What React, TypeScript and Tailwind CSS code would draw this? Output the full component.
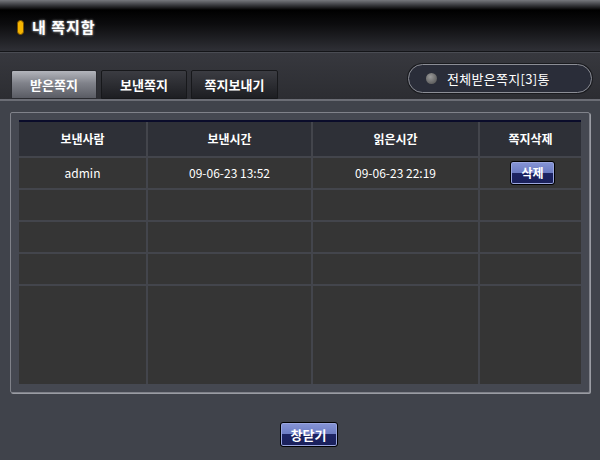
import React from 'react'

const font = { fontFamily: '"Noto Sans CJK KR", "Liberation Sans", sans-serif' }

const rows = [
  { from: 'admin', sent: '09-06-23 13:52', read: '09-06-23 22:19' },
]

const BlueButton: React.FC<{ label: string; className?: string }> = ({ label, className }) => {
  return (
    <button
      className={`rounded-[3px] border border-black bg-[linear-gradient(to_bottom,#8795d6_0%,#6b7bc2_50%,#1d2463_50%,#1a205a_100%)] p-[1px] text-[12px] font-bold leading-none text-white shadow-[inset_0_0_0_1px_#9aa6de] ${className ?? ''}`}
    >
      {label}
    </button>
  )
}

export default function App() {
  return (
    <div className="flex h-[460px] w-[600px] flex-col overflow-hidden bg-[#40434b]" style={font}>
      {/* header */}
      <div className="flex h-[51px] items-center gap-[8px] bg-[linear-gradient(to_bottom,#76787d_0px,#3a3b3f_5px,#000_10px,#0c0c0e_24px,#2f3036_51px)] pl-[17px] pt-[4px]">
        <span className="h-[15px] w-[7px] rounded-full border border-[#7a5200] bg-[#f5b400]" />
        <span className="text-[15px] font-bold tracking-[1px] text-white [text-shadow:0_0_3px_#999,0_0_2px_#777]">내 쪽지함</span>
      </div>
      <div className="h-[1px] bg-[#141518]" />
      <div className="h-[1px] bg-[#4a4c53]" />

      {/* tabs */}
      <div className="flex h-[46px] items-end justify-between bg-[linear-gradient(to_bottom,#37383e,#2c2d32)] px-[10px]">
        <div className="flex gap-[4px] pl-[1px]">
          <div className="flex h-[29px] w-[86px] items-center justify-center rounded-t-[2px] border border-[#2a2b30] bg-[linear-gradient(to_bottom,#b3b5bc,#80828a_45%,#5a5c64)] text-[13px] font-bold text-white">
            받은쪽지
          </div>
          <div className="flex h-[29px] w-[86px] items-center justify-center rounded-t-[2px] border border-[#17181b] bg-[linear-gradient(to_bottom,#3b3c42,#1d1e22)] text-[13px] font-bold text-white">
            보낸쪽지
          </div>
          <div className="flex h-[29px] w-[87px] items-center justify-center rounded-t-[2px] border border-[#17181b] bg-[linear-gradient(to_bottom,#3b3c42,#1d1e22)] text-[13px] font-bold text-white">
            쪽지보내기
          </div>
        </div>
        <div className="mb-[6px] mr-[-2px] flex h-[29px] w-[184px] items-center gap-[10px] rounded-full border border-[#8c8e96] bg-[#2a2d39] pl-[17px] shadow-[0_0_0_1px_#1a1b1f]">
          <span className="h-[11px] w-[11px] rounded-full bg-[radial-gradient(circle_at_40%_35%,#9a9a9a,#4a4a4a)]" />
          <span className="text-[13px] tracking-[0.3px] text-white">전체받은쪽지[3]통</span>
        </div>
      </div>
      <div className="h-[2px] bg-[#6b6d75]" />

      {/* panel */}
      <div className="mx-[10px] mt-[11px] h-[281px] rounded-[2px] border border-[#80828a] bg-[#454851] px-[8px] pt-[7px] shadow-[1px_1px_0_#9a9ca3]">
        <div className="border-t-2 border-[#0a0c2a]">
          <div className="grid grid-cols-[127px_163px_165px_101px] gap-[2px] bg-[#43454c] text-[12px] text-white">
            {['보낸사람', '보낸시간', '읽은시간', '쪽지삭제'].map((h) => (
              <div key={h} className="flex h-[34px] items-center justify-center bg-[#2e3037] font-bold">
                {h}
              </div>
            ))}
            {rows.map((r) => (
              <React.Fragment key={r.from}>
                <div className="flex h-[30px] items-center justify-center bg-[#353535]">{r.from}</div>
                <div className="flex h-[30px] items-center justify-center bg-[#353535]">{r.sent}</div>
                <div className="flex h-[30px] items-center justify-center bg-[#353535]">{r.read}</div>
                <div className="flex h-[30px] items-center justify-center bg-[#353535]">
                  <BlueButton label="삭제" className="ml-[4px] h-[24px] w-[45px]" />
                </div>
              </React.Fragment>
            ))}
            {[0, 1, 2].map((i) => (
              <React.Fragment key={i}>
                <div className="h-[30px] bg-[#353535]" />
                <div className="h-[30px] bg-[#353535]" />
                <div className="h-[30px] bg-[#353535]" />
                <div className="h-[30px] bg-[#353535]" />
              </React.Fragment>
            ))}
            <div className="h-[98px] bg-[#353535]" />
            <div className="h-[98px] bg-[#353535]" />
            <div className="h-[98px] bg-[#353535]" />
            <div className="h-[98px] bg-[#353535]" />
          </div>
        </div>
      </div>

      {/* footer */}
      <div className="flex justify-center pt-[29px]">
        <BlueButton label="창닫기" className="ml-[17px] h-[25px] w-[58px] text-[13px]" />
      </div>
    </div>
  )
}
